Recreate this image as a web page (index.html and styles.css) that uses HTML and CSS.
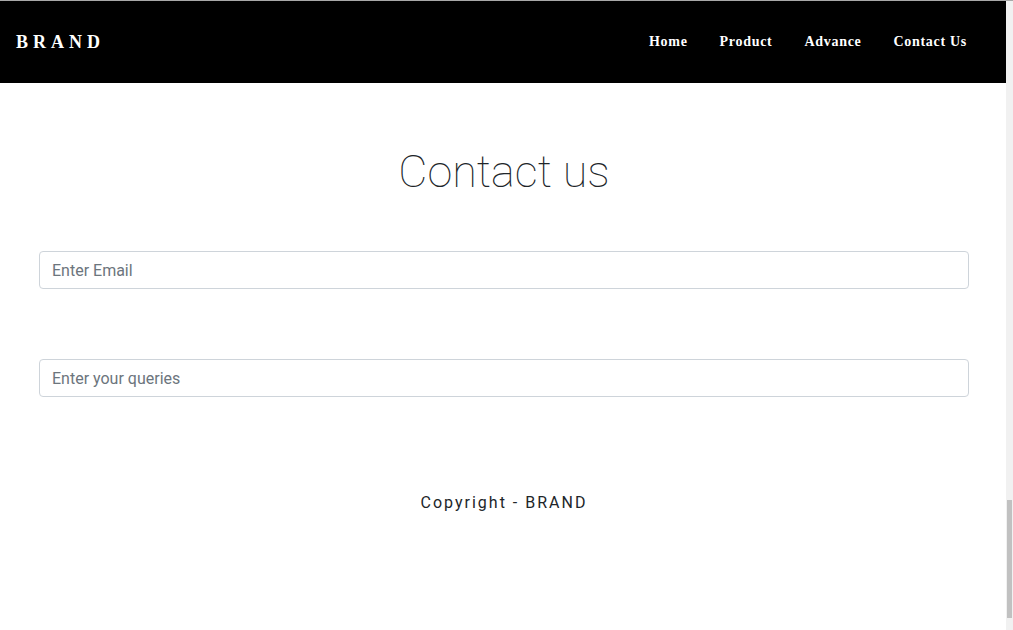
FILE: index.html
```html
<!DOCTYPE html>
<html>
<head>
<meta charset="utf-8">
<title>Contact us - BRAND</title>
<link rel="stylesheet" href="styles.css">
</head>
<body>
<div class="page">
  <header class="navbar">
    <a class="brand" href="#">BRAND</a>
    <nav class="nav">
      <a href="#">Home</a>
      <a href="#">Product</a>
      <a href="#">Advance</a>
      <a href="#">Contact Us</a>
    </nav>
  </header>
  <main class="contact">
    <h1 class="title">Contact us</h1>
    <form class="form">
      <input class="field" type="email" placeholder="Enter Email">
      <input class="field" type="text" placeholder="Enter your queries">
    </form>
    <footer class="footer">Copyright - BRAND</footer>
  </main>
</div>
<div class="scrollbar"><div class="thumb"></div></div>
</body>
</html>
```
FILE: styles.css
```css
* { box-sizing: border-box; }
html, body { margin: 0; padding: 0; }
body {
  background: #fff;
  font-family: Roboto, "Liberation Sans", sans-serif;
  border-top: 1px solid #a8a8a8;
  height: 630px;
  overflow: hidden;
}
.page {
  width: 1006px;
}
.navbar {
  background: #000;
  height: 82px;
  display: flex;
  align-items: center;
  justify-content: space-between;
  padding: 0 16px 0 16px;
}
.brand {
  color: #fff;
  text-decoration: none;
  font-family: "Liberation Serif", serif;
  font-weight: bold;
  font-size: 18px;
  letter-spacing: 5px;
}
.nav {
  display: flex;
  gap: 32px;
  padding-right: 23px;
}
.nav a {
  color: #fff;
  text-decoration: none;
  font-family: "Liberation Serif", serif;
  font-weight: bold;
  font-size: 14px;
  letter-spacing: 0.7px;
}
.contact {
  padding: 0 37px 0 39px;
}
.title {
  margin: 62px 0 0;
  text-align: center;
  font-weight: 100;
  font-size: 45px;
  line-height: 54px;
  color: #212529;
}
.form {
  margin-top: 52px;
  display: flex;
  flex-direction: column;
  gap: 70px;
}
.field {
  display: block;
  width: 100%;
  height: 38px;
  padding: 6px 12px;
  font-family: Roboto, "Liberation Sans", sans-serif;
  font-size: 16px;
  color: #495057;
  border: 1px solid #ced4da;
  border-radius: 4px;
  background: #fff;
}
.field::placeholder { color: #6c757d; }
.footer {
  margin-top: 96px;
  text-align: center;
  font-size: 16px;
  letter-spacing: 2px;
  color: #212529;
}
.scrollbar {
  position: fixed;
  top: 1px;
  right: 0;
  width: 7px;
  height: 629px;
  background: #f1f1f1;
}
.thumb {
  position: absolute;
  left: 1px;
  right: 1px;
  top: 499px;
  height: 118px;
  background: #c1c1c1;
}
```
